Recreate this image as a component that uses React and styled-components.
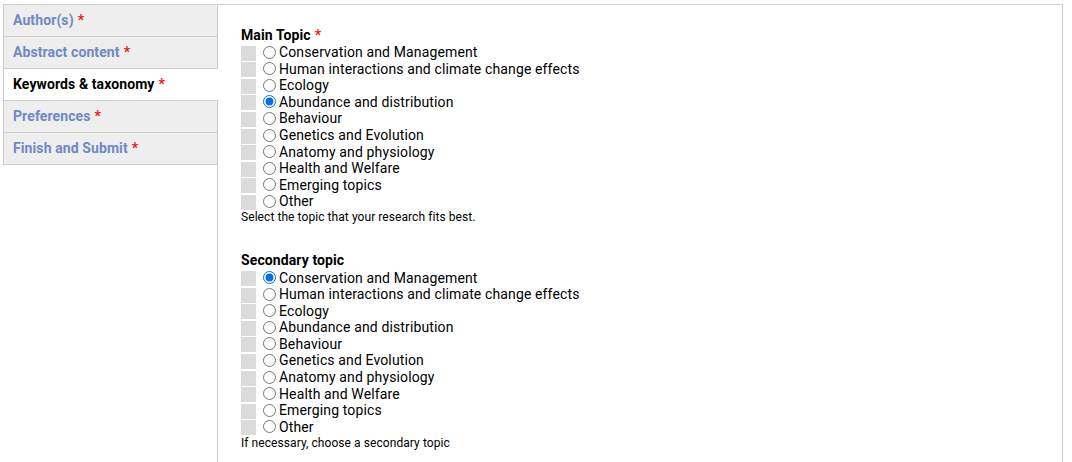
import React from "react";
import styled, { createGlobalStyle } from "styled-components";

const Global = createGlobalStyle`
  html, body { margin: 0; padding: 0; background: #fff; }
  body { font-family: Roboto, "Liberation Sans", Arial, sans-serif; color: #000; }
`;

const Page = styled.div`
  display: flex;
  align-items: flex-start;
  padding: 4px 0 0 3px;
  width: 1063px;
  box-sizing: border-box;
`;

const Nav = styled.ul`
  list-style: none;
  margin: 0;
  padding: 0;
  width: 215px;
  flex: none;
  position: relative;
  z-index: 1;
  border-top: 1px solid #cccccc;
`;

const Tab = styled.li`
  box-sizing: border-box;
  display: flex;
  align-items: center;
  padding: 0 0 1px 9px;
  border-left: 1px solid #cccccc;
  border-right: 1px solid ${(p) => (p.$active ? "#ffffff" : "#cccccc")};
  border-bottom: 1px solid #cccccc;
  background: ${(p) => (p.$active ? "#ffffff" : "#eeeeee")};
  height: 32px;
  font-size: 14px;
  font-weight: 700;
  letter-spacing: 0.1px;
  color: ${(p) => (p.$active ? "#000000" : "#7088c5")};
  width: ${(p) => (p.$active ? "216px" : "215px")};
`;

const Star = styled.span`
  color: #e8191c;
  margin-left: 4px;
`;

const Panel = styled.div`
  flex: 1;
  margin-left: -1px;
  border: 1px solid #cccccc;
  border-bottom: none;
  min-height: 470px;
  padding: 22px 23px 0 23px;
  box-sizing: border-box;
`;

const Field = styled.fieldset`
  border: none;
  margin: 0 0 28px 0;
  padding: 0;
`;

const Legend = styled.div`
  font-size: 14px;
  font-weight: 700;
  line-height: 16px;
  letter-spacing: 0.1px;
  margin-bottom: 1px;
`;

const Option = styled.label`
  display: flex;
  align-items: center;
  height: 16.55px;
  font-size: 14px;
  line-height: 16px;
  letter-spacing: 0.13px;
  white-space: nowrap;
`;

const Handle = styled.span`
  width: 15px;
  height: 15px;
  background: #dbdbdb;
  flex: none;
  margin-top: 2px;
`;

const Radio = styled.input.attrs({ type: "radio" })`
  width: 13px;
  height: 13px;
  margin: 0 3px 0 7px;
  flex: none;
  accent-color: #0b6ee0;
`;

const Help = styled.div`
  font-size: 12px;
  line-height: 14px;
  letter-spacing: 0.07px;
  margin-top: 1px;
`;

const topics = [
  "Conservation and Management",
  "Human interactions and climate change effects",
  "Ecology",
  "Abundance and distribution",
  "Behaviour",
  "Genetics and Evolution",
  "Anatomy and physiology",
  "Health and Welfare",
  "Emerging topics",
  "Other",
];

function TopicField({ name, title, required, selected, help }) {
  return (
    <Field>
      <Legend>
        {title}
        {required && <Star>*</Star>}
      </Legend>
      {topics.map((t, i) => (
        <Option key={t}>
          <Handle />
          <Radio name={name} defaultChecked={i === selected} />
          {t}
        </Option>
      ))}
      <Help>{help}</Help>
    </Field>
  );
}

const tabs = [
  "Author(s)",
  "Abstract content",
  "Keywords & taxonomy",
  "Preferences",
  "Finish and Submit",
];

export default function App() {
  return (
    <>
      <Global />
      <Page>
        <Nav>
          {tabs.map((t, i) => (
            <Tab key={t} $active={i === 2}>
              {t}
              <Star>*</Star>
            </Tab>
          ))}
        </Nav>
        <Panel>
          <TopicField
            name="main"
            title="Main Topic"
            required
            selected={3}
            help="Select the topic that your research fits best."
          />
          <TopicField
            name="secondary"
            title="Secondary topic"
            selected={0}
            help="If necessary, choose a secondary topic"
          />
        </Panel>
      </Page>
    </>
  );
}
